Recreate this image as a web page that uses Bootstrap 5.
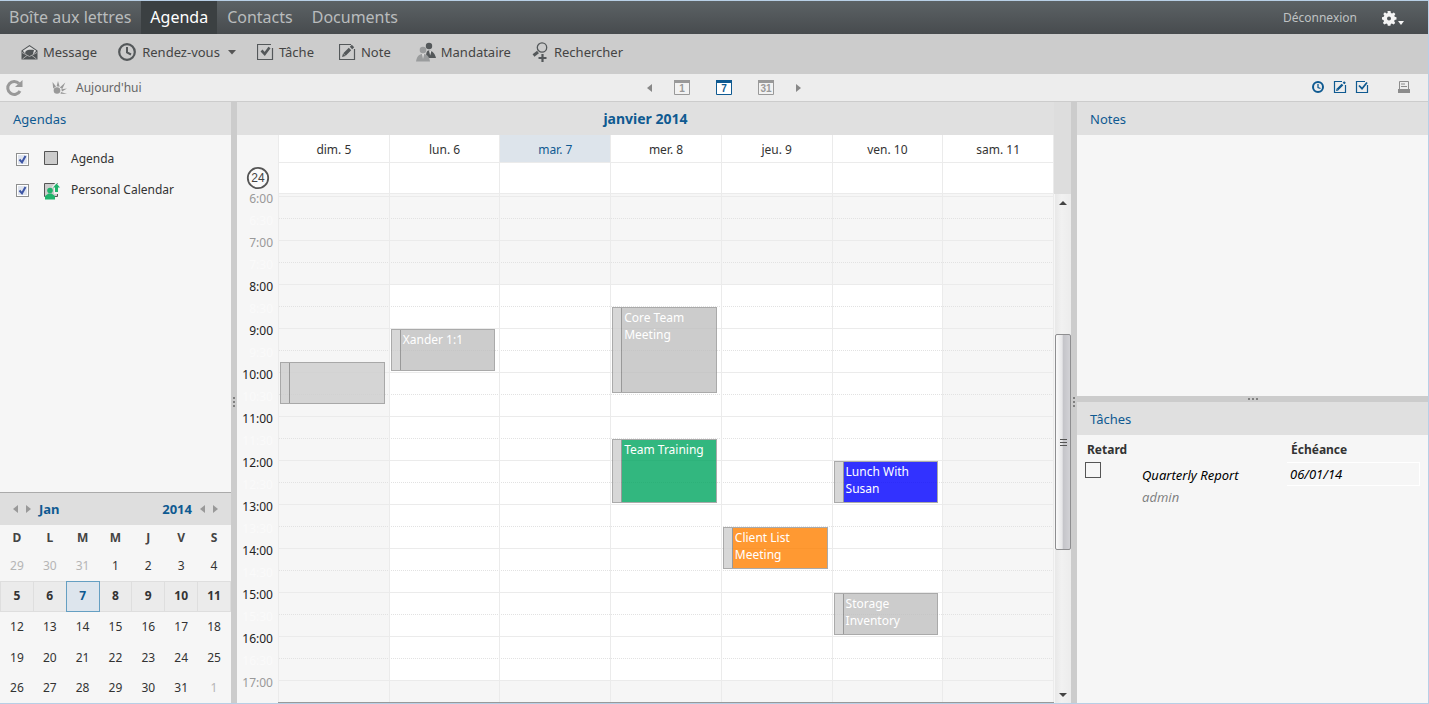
<!DOCTYPE html>
<html lang="fr">
<head>
<meta charset="utf-8">
<meta name="viewport" content="width=device-width, initial-scale=1">
<title>Agenda</title>
<link href="https://cdn.jsdelivr.net/npm/bootstrap@5.3.0/dist/css/bootstrap.min.css" rel="stylesheet">
<style>
  :root { --hour: 44px; --blue: #0f5a91; --line: #ebebeb; --pane: #f6f6f6; --head: #e0e0e0; --split: #ccc; }
  body { font: 12px/18px "Noto Sans", "Open Sans", sans-serif; color: #333; background: var(--pane); }
  .app-shell { border: 1px solid #b8cfe6; border-left: 0; }
  a { color: inherit; text-decoration: none; }
  button { border: 0; background: none; padding: 0; color: inherit; font: inherit; }
  svg { display: block; flex: none; }

  .top-bar { height: 33px; background: linear-gradient(#5c6265, #474b4e); color: #bfc2c3; }
  .top-nav { gap: 1px; }
  .top-bar .nav-link { font-size: 16px; line-height: 33px; padding: 0 9px; color: #b9bcbd; }
  .top-bar .nav-link.active { background: #3b4042; color: #fff; }
  .tool-bar { height: 40px; background: #ccc; font-size: 13px; color: #444; padding: 0 21px 4px; gap: 21px; }
  .sub-bar { height: 28px; background: #ededed; border-bottom: 1px solid #ccc; color: #666; }
  .view-switch { gap: 22px; }
  .date-tools { padding-right: 32px; }
  .pane-toggles { padding-right: 13px; }

  .side-left { width: 231px; }
  .side-right { width: 351px; }
  .pane-head { height: 33px; line-height: 34px; padding: 0 13px; background: var(--head); color: var(--blue); font-size: 13px; margin: 0; font-weight: 400; }
  .month-title { font-size: 14px; font-weight: 700; text-align: center; }
  .split-v { width: 6px; background: var(--split); }
  .split-h { height: 6px; background: var(--split); }
  .agenda-list { padding: 14px 16px; gap: 11px; }
  .agenda-list label { height: 20px; gap: 13px; color: #333; }
  .agenda-check { appearance: none; width: 13px; height: 13px; margin: 0; border: 1px solid #8e8f8f; background: #e4e8ee; box-shadow: inset 0 0 0 1px #fff; }
  .agenda-check:checked { background: #dfe4ee url("data:image/svg+xml,%3Csvg xmlns='http://www.w3.org/2000/svg' viewBox='0 0 11 11'%3E%3Cpath d='M2.5 5.5 5 8.300 8.500 2' fill='none' stroke='%233d55a5' stroke-width='2'/%3E%3C/svg%3E"); }

  .mini-cal { border-top: 1px solid #aaa; }
  .mini-head { height: 32px; background: #dedede; color: var(--blue); padding: 0 13px; font-weight: 700; font-size: 13px; }
  .mini-table { width: 100%; table-layout: fixed; text-align: center; border-collapse: collapse; margin-bottom: 0; }
  .mini-table th { height: 26px; font-weight: 700; color: #444; }
  .mini-table td { height: 31px; padding: 0; }
  .mini-table .short-week td { height: 30px; }
  .mini-table .out { color: #b5b5b5; }
  .mini-table .this-week td { font-weight: 700; background: #ebebeb; border: 1px solid #dedede; height: 30px; }
  .mini-table .this-week .today { background: #dde5ed; border: 1px double #659fc2; color: var(--blue); }

  .gutter { width: 41px; }
  .week-cols { display: grid; grid-template-columns: repeat(7, minmax(0, 1fr)); border-right: 1px solid var(--line); }
  .week-cols > * { border-left: 1px solid var(--line); }
  .day-name { height: 28px; line-height: 29px; text-align: center; background: #fff; border-bottom: 1px solid var(--line); }
  .day-name.today { background: #dde4eb; color: var(--blue); }
  .all-day { height: 31px; background: #fff; border-bottom: 1px solid var(--line); }
  .bar-filler { width: 17px; background: #ddd; }
  .week-body { min-height: 0; }
  .hour-gutter { margin-top: -6px; text-align: right; padding-right: 5px; }
  .hour-label { height: 22px; line-height: 22px; color: #222; }
  .hour-label.off { color: #999; }
  .hour-label.half { color: #fafafa; }
  .grid-zone { border-bottom: 1px solid #999; }
  .hour-rows { padding-top: 2px; }
  .hour-row { height: var(--hour); border-top: 1px solid var(--line); }
  .hour-row::before { content: ""; display: block; height: 21px; }
  .hour-row::after { content: ""; display: block; border-top: 1px dotted #e2e2e2; }
  .col-layer { inset: 0; }
  .work-time { top: calc(2px + 2 * var(--hour)); height: calc(9 * var(--hour)); left: 0; right: 0; background: #fff; z-index: -1; }
  .event-box { top: calc(3px + (var(--start) - 6) * var(--hour)); height: calc(var(--hours) * var(--hour) - 2px); left: 1px; right: 4px; border: 1px solid #959595; opacity: .8; background: #c0c0c0; color: #fff; line-height: 17px; display: flex; overflow: hidden; }
  .event-box::before { content: ""; flex: none; width: 9px; background: #cecece; border-right: 1px solid #808080; }
  .event-box span { padding: 1px 2px; }
  .event-green { background: #00a660; } .event-blue { background: #00f; } .event-orange { background: #ff8000; } .event-pale { background: #cecece; }

  .scroll-bar { width: 16px; margin-left: 1px; background: linear-gradient(90deg, #e8e8e8, #f1f1f1 40%, #ececec); }
  .scroll-btn { height: 17px; display: grid; place-items: center; }
  .scroll-thumb { border: 1px solid #8e8e90; border-radius: 2px; background: linear-gradient(90deg, #fafafa, #e6e6e8 45%, #c4c4c9 50%, #d2d2d6); }

  .task-table { width: 100%; table-layout: fixed; }
  .task-table th { padding: 6px 0 3px 10px; font-weight: 700; }
  .task-table td { padding: 0; vertical-align: top; font-size: 13px; }
  .task-check { appearance: none; width: 16px; height: 16px; border: 1px solid #555; margin: 0 0 0 8px; display: block; }
  .task-date { width: 133px; height: 24px; border: 1px solid #fff; border-left: 0; background: none; font-style: italic; color: #000; padding: 1px 3px; }
</style>
</head>
<body>
<div class="app-shell vh-100 d-flex flex-column overflow-hidden">

  <header class="top-bar d-flex flex-shrink-0 justify-content-between">
    <nav class="nav top-nav">
      <a class="nav-link" href="#">Boîte aux lettres</a>
      <a class="nav-link active" href="#">Agenda</a>
      <a class="nav-link" href="#">Contacts</a>
      <a class="nav-link" href="#">Documents</a>
    </nav>
    <div class="d-flex align-items-center gap-4 pe-4">
      <a href="#">Déconnexion</a>
      <button type="button" aria-label="Paramètres">
        <svg width="23" height="16" viewBox="0 0 23 16"><g fill="#f4f4f4"><path fill-rule="evenodd" d="M6.500 1h3l.4 2 1.200.5 1.700-1.100 1.600 1.600-1.100 1.700.4 1.100 1.800.4v2.400l-1.900.4-.4 1.200 1 1.700-1.600 1.600-1.700-1.100-1.100.5-.4 1.800h-2.600l-.4-1.800-1.200-.5-1.700 1.100-1.600-1.600 1.100-1.700-.5-1.200L1 9.500V7.200l1.800-.4.5-1.200-1-1.700 1.600-1.600 1.600 1.100 1.200-.5zM8 6.400a2 2 0 1 0 0 4 2 2 0 0 0 0-4z"/><path d="M17 11h6l-3 4z"/></g></svg>
      </button>
    </div>
  </header>

  <div class="tool-bar d-flex flex-shrink-0 align-items-center">
    <button type="button" class="d-flex align-items-center gap-1">
      <svg width="18" height="18" viewBox="0 0 18 18"><path d="M.5 7.500 8.500 2l8 5.500v9H.5z" fill="#505456"/><path d="M1.800 7.800 8.500 3.200l6.700 4.600L12.500 11h-8z" fill="#dcdcdc"/><path d="M4.500 8.500c3-2.500 6-1.500 8.500-1.500l-1.200 4.500-3.300 1.500L4 10.500z" fill="#505456"/><path d="m1 9.500 7.500 4L16 9.500M1.500 16l4.500-3.500M15.500 16 11 12.500" stroke="#aaa" fill="none"/></svg>Message</button>
    <button type="button" class="d-flex align-items-center gap-1">
      <svg width="20" height="20" viewBox="0 0 20 20" fill="none" stroke="#54585a"><circle cx="9" cy="10" r="7.800" stroke-width="2.200"/><path d="M9 5v5.500l4 2" stroke-width="2"/></svg>Rendez-vous
      <svg class="ms-1" width="8" height="5"><path d="M0 0h8L4 4.500z" fill="#555"/></svg></button>
    <button type="button" class="d-flex align-items-center gap-1">
      <svg width="18" height="18" viewBox="0 0 18 18" fill="none" stroke="#54585a"><path d="M15.500 5v11.500H.500V1.500H14" stroke-width="1.200"/><path d="m4.500 7.500 3.200 3.500L12.500 4.500" stroke-width="2.600"/></svg>Tâche</button>
    <button type="button" class="d-flex align-items-center gap-1 ms-1">
      <svg width="18" height="18" viewBox="0 0 18 18" fill="none" stroke="#54585a"><path d="M15.500 6v10.500H.500V1.500H12" stroke-width="1.200"/><path d="m5.500 11.500 5.500-5.500M12 5l2-2" stroke-width="3.400"/><path d="m3 14 1-3.500 2.500 2.500z" fill="#54585a" stroke="none"/></svg>Note</button>
    <button type="button" class="d-flex align-items-center gap-1 ms-1">
      <svg width="21" height="20" viewBox="0 0 21 20"><g fill="#54585a"><circle cx="13" cy="4" r="3.200"/><path d="M10 15c0-5 1-6.500 3-6.500s5.500 1.500 7 7.500h-9z"/><path d="m13 8.500 1.200 5 1.300-5z" fill="#ddd"/></g><g fill="#9a9c9d"><circle cx="7" cy="8" r="3.300"/><path d="M0 19.500C1 14 3 12 7 12s6 2 7 7.500z"/><path d="m6 12 1 5 1.200-5z" fill="#ddd"/></g></svg>Mandataire</button>
    <button type="button" class="d-flex align-items-center gap-1">
      <svg width="18" height="20" viewBox="0 0 18 20" fill="none" stroke="#54585a"><circle cx="10" cy="5.500" r="4.700" stroke-width="1.300"/><path d="M6 10 1.500 13.500" stroke-width="3"/><path d="M10.500 12v8M6.500 16h8" stroke-width="2.200"/></svg>Rechercher</button>
  </div>

  <div class="sub-bar row g-0 flex-shrink-0 align-items-center">
    <div class="col d-flex align-items-center date-tools">
      <button type="button" class="ms-1" aria-label="Actualiser"><svg width="20" height="18" viewBox="0 0 20 18"><path d="M16 12a6.500 6.500 0 1 1-1-7.500" fill="none" stroke="#999" stroke-width="3"/><path d="M18.500 1v7H11z" fill="#999"/></svg></button>
      <button type="button" class="d-flex align-items-center gap-2 ms-4 ps-1"><svg width="16" height="16" viewBox="0 0 16 16"><g fill="#999"><circle cx="5" cy="10.500" r="3.300"/><path d="m1.200 8.500-.7-6.500L4 6.500zM4.600 6.300 6 1l1.700 5.700zM7.800 7.500l5.500-5-3 6.500zM9.300 9.200l5.700-.7-5 3zM9 12l6 2-6.500-.2z"/></g></svg>Aujourd'hui</button>
    </div>
    <div class="col-auto d-flex align-items-center view-switch">
      <button type="button" aria-label="Précédent"><svg width="5" height="8"><path d="M5 0v8L0 4z" fill="#888"/></svg></button>
      <button type="button" aria-label="Jour"><svg width="16" height="17" viewBox="0 0 16 17"><path d="M.5 1.500h15v14H.5z" fill="#f2f2f2" stroke="#999"/><path d="M0 1h16v3H0z" fill="#999"/><text x="8" y="13" text-anchor="middle" font-family="Liberation Sans" font-size="10" font-weight="700" fill="#999">1</text></svg></button>
      <button type="button" class="mx-1" aria-label="Semaine"><svg width="16" height="17" viewBox="0 0 16 17"><path d="M.5 1.500h15v14H.5z" fill="#fff" stroke="#0f5a91"/><path d="M0 1h16v3H0z" fill="#0f5a91"/><text x="8" y="13" text-anchor="middle" font-family="Liberation Sans" font-size="10" font-weight="700" fill="#0f5a91">7</text></svg></button>
      <button type="button" aria-label="Mois"><svg width="16" height="17" viewBox="0 0 16 17"><path d="M.5 1.500h15v14H.5z" fill="#f2f2f2" stroke="#999"/><path d="M0 1h16v3H0z" fill="#999"/><text x="8" y="13" text-anchor="middle" font-family="Liberation Sans" font-size="10" font-weight="700" fill="#999">31</text></svg></button>
      <button type="button" aria-label="Suivant"><svg width="5" height="8"><path d="M0 0v8l5-4z" fill="#888"/></svg></button>
    </div>
    <div class="col d-flex align-items-center justify-content-end pane-toggles">
      <button type="button" class="me-2" aria-label="Rendez-vous"><svg width="14" height="16" viewBox="0 0 14 16" fill="none" stroke="#0f5a91"><circle cx="7" cy="7" r="5" stroke-width="2"/><path d="M7 4v3.500l2.500 1" stroke-width="1.300"/></svg></button>
      <button type="button" class="me-2" aria-label="Notes"><svg width="14" height="16" viewBox="0 0 14 16" fill="none" stroke="#0f5a91"><path d="M12.500 5v7.500h-11v-11H9" stroke-width="1.200"/><path d="m4.500 9.500 5-5M10.500 3.500l1.500-1.500" stroke-width="2.400"/><path d="m3 11 .6-2.500L5.500 10.400z" fill="#0f5a91" stroke="none"/></svg></button>
      <button type="button" class="me-4" aria-label="Tâches"><svg width="14" height="16" viewBox="0 0 14 16" fill="none" stroke="#0f5a91"><path d="M12.500 5v7.500h-11v-11H10" stroke-width="1.200"/><path d="m4 5.500 3 3.200L12 2.500" stroke-width="1.800"/></svg></button>
      <button type="button" class="mx-1" aria-label="Imprimer"><svg width="14" height="16" viewBox="0 0 14 16"><path d="M2.500 9V1.500h9V9M4 4h4M4 6.500h6" fill="none" stroke="#8c8c8c"/><path d="M1 9h12v4H1z" fill="#8c8c8c"/></svg></button>
    </div>
  </div>

  <main class="d-flex flex-fill overflow-hidden">
    <aside class="side-left flex-shrink-0 d-flex flex-column justify-content-between">
      <section>
        <h2 class="pane-head">Agendas</h2>
        <div class="agenda-list d-flex flex-column">
          <label class="d-flex align-items-center"><input type="checkbox" class="agenda-check" checked>
            <svg width="16" height="18" viewBox="0 0 16 18"><path d="M2.500 1.500h13v13h-13z" fill="#ccc" stroke="#555"/></svg>Agenda</label>
          <label class="d-flex align-items-center"><input type="checkbox" class="agenda-check" checked>
            <svg width="16" height="20" viewBox="0 0 16 20" overflow="visible"><path d="M2.500 3.500h13v13h-13z" fill="#ccc" stroke="#555"/><path d="m14 2 4.500 5.500H17V14h-5V7.500H9.500z" fill="#f2f2f2"/><g fill="#1fb36b"><circle cx="8" cy="10.500" r="2.800"/><path d="M3 19.500V16l3.500-2.500h3L13 16v3.500z"/><path d="m14.500 3.500 3.500 4h-2v4.500h-3V7.500h-2z"/></g></svg>Personal Calendar</label>
        </div>
      </section>
      <section class="mini-cal">
        <div class="mini-head d-flex align-items-center justify-content-between">
          <div class="d-flex align-items-center gap-2">
            <button type="button" aria-label="Mois précédent"><svg width="5" height="8"><path d="M5 0v8L0 4z" fill="#999"/></svg></button>
            <button type="button" aria-label="Mois suivant"><svg width="5" height="8"><path d="M0 0v8l5-4z" fill="#999"/></svg></button>
            <span>Jan</span></div>
          <div class="d-flex align-items-center gap-2"><span>2014</span>
            <button type="button" aria-label="Année précédente"><svg width="5" height="8"><path d="M5 0v8L0 4z" fill="#999"/></svg></button>
            <button type="button" aria-label="Année suivante"><svg width="5" height="8"><path d="M0 0v8l5-4z" fill="#999"/></svg></button></div>
        </div>
        <table class="mini-table">
          <thead><tr><th>D</th><th>L</th><th>M</th><th>M</th><th>J</th><th>V</th><th>S</th></tr></thead>
          <tbody>
            <tr class="short-week"><td class="out">29</td><td class="out">30</td><td class="out">31</td><td>1</td><td>2</td><td>3</td><td>4</td></tr>
            <tr class="this-week"><td>5</td><td>6</td><td class="today">7</td><td>8</td><td>9</td><td>10</td><td>11</td></tr>
            <tr><td>12</td><td>13</td><td>14</td><td>15</td><td>16</td><td>17</td><td>18</td></tr>
            <tr><td>19</td><td>20</td><td>21</td><td>22</td><td>23</td><td>24</td><td>25</td></tr>
            <tr class="short-week"><td>26</td><td>27</td><td>28</td><td>29</td><td>30</td><td>31</td><td class="out">1</td></tr>
          </tbody>
        </table>
      </section>
    </aside>

    <div class="split-v flex-shrink-0 d-flex align-items-center justify-content-center"><svg width="3" height="11"><path d="M0 0h2v2H0zM0 4h2v2H0zM0 8h2v2H0z" fill="#808080"/></svg></div>

    <section class="flex-fill d-flex flex-column overflow-hidden">
      <div class="d-flex flex-shrink-0">
        <div class="flex-fill">
          <h1 class="pane-head month-title">janvier 2014</h1>
          <div class="d-flex">
            <div class="gutter flex-shrink-0 d-flex align-items-end justify-content-center pb-1">
              <svg width="24" height="24" viewBox="0 0 24 24"><circle cx="12" cy="12" r="10.200" fill="#fafafa" stroke="#555" stroke-width="1.800"/><text x="12" y="16" text-anchor="middle" font-family="Liberation Sans" font-size="12" fill="#444">24</text></svg>
            </div>
            <div class="flex-fill">
              <div class="week-cols">
                <div class="day-name">dim. 5</div><div class="day-name">lun. 6</div><div class="day-name today">mar. 7</div><div class="day-name">mer. 8</div><div class="day-name">jeu. 9</div><div class="day-name">ven. 10</div><div class="day-name">sam. 11</div>
              </div>
              <div class="week-cols">
                <div class="all-day"></div><div class="all-day"></div><div class="all-day"></div><div class="all-day"></div><div class="all-day"></div><div class="all-day"></div><div class="all-day"></div>
              </div>
            </div>
          </div>
        </div>
        <div class="bar-filler flex-shrink-0"></div>
      </div>

      <div class="week-body d-flex flex-fill">
        <div class="gutter flex-shrink-0">
          <div class="hour-gutter">
            <div class="hour-label off">6:00</div><div class="hour-label half">6:30</div>
            <div class="hour-label off">7:00</div><div class="hour-label half">7:30</div>
            <div class="hour-label">8:00</div><div class="hour-label half">8:30</div>
            <div class="hour-label">9:00</div><div class="hour-label half">9:30</div>
            <div class="hour-label">10:00</div><div class="hour-label half">10:30</div>
            <div class="hour-label">11:00</div><div class="hour-label half">11:30</div>
            <div class="hour-label">12:00</div><div class="hour-label half">12:30</div>
            <div class="hour-label">13:00</div><div class="hour-label half">13:30</div>
            <div class="hour-label">14:00</div><div class="hour-label half">14:30</div>
            <div class="hour-label">15:00</div><div class="hour-label half">15:30</div>
            <div class="hour-label">16:00</div><div class="hour-label half">16:30</div>
            <div class="hour-label off">17:00</div>
          </div>
        </div>
        <div class="grid-zone flex-fill position-relative overflow-hidden z-0">
          <div class="hour-rows">
            <div class="hour-row"></div><div class="hour-row"></div><div class="hour-row"></div><div class="hour-row"></div><div class="hour-row"></div><div class="hour-row"></div><div class="hour-row"></div><div class="hour-row"></div><div class="hour-row"></div><div class="hour-row"></div><div class="hour-row"></div><div class="hour-row"></div>
          </div>
          <div class="col-layer week-cols position-absolute">
            <div class="position-relative">
              <div class="event-box event-pale position-absolute" style="--start:9.75;--hours:1"></div>
            </div>
            <div class="position-relative"><div class="work-time position-absolute"></div>
              <div class="event-box position-absolute" style="--start:9;--hours:1"><span>Xander 1:1</span></div>
            </div>
            <div class="position-relative"><div class="work-time position-absolute"></div></div>
            <div class="position-relative"><div class="work-time position-absolute"></div>
              <div class="event-box position-absolute" style="--start:8.5;--hours:2"><span>Core Team Meeting</span></div>
              <div class="event-box event-green position-absolute" style="--start:11.5;--hours:1.5"><span>Team Training</span></div>
            </div>
            <div class="position-relative"><div class="work-time position-absolute"></div>
              <div class="event-box event-orange position-absolute" style="--start:13.5;--hours:1"><span>Client List Meeting</span></div>
            </div>
            <div class="position-relative"><div class="work-time position-absolute"></div>
              <div class="event-box event-blue position-absolute" style="--start:12;--hours:1"><span>Lunch With Susan</span></div>
              <div class="event-box position-absolute" style="--start:15;--hours:1"><span>Storage Inventory</span></div>
            </div>
            <div class="position-relative"></div>
          </div>
        </div>
        <div class="scroll-bar flex-shrink-0 d-flex flex-column">
          <div class="scroll-btn"><svg width="8" height="4"><path d="M0 4h8L4 0z" fill="#444"/></svg></div>
          <div style="flex:124 0 0"></div>
          <div class="scroll-thumb d-flex align-items-center justify-content-center" style="flex:215 0 0"><svg width="7" height="9"><path d="M0 1.500h7M0 4.500h7M0 7.500h7" stroke="#555"/></svg></div>
          <div style="flex:137 0 0"></div>
          <div class="scroll-btn"><svg width="8" height="4"><path d="M0 0h8L4 4z" fill="#444"/></svg></div>
        </div>
      </div>
    </section>

    <div class="split-v flex-shrink-0 d-flex align-items-center justify-content-center"><svg width="3" height="11"><path d="M0 0h2v2H0zM0 4h2v2H0zM0 8h2v2H0z" fill="#808080"/></svg></div>

    <aside class="side-right flex-shrink-0 d-flex flex-column">
      <section style="flex:294 0 0"><h2 class="pane-head">Notes</h2></section>
      <div class="split-h d-flex align-items-center justify-content-center"><svg width="10" height="2"><path d="M0 0h2v2H0zM4 0h2v2H4zM8 0h2v2H8z" fill="#808080"/></svg></div>
      <section style="flex:301 0 0">
        <h2 class="pane-head">Tâches</h2>
        <table class="task-table">
          <colgroup><col style="width:65px"><col><col style="width:141px"></colgroup>
          <thead><tr><th colspan="2">Retard</th><th class="ps-1">Échéance</th></tr></thead>
          <tbody><tr>
            <td><input type="checkbox" class="task-check" aria-label="Quarterly Report terminée"></td>
            <td class="fst-italic"><div class="text-black pt-1">Quarterly Report</div><div class="text-black-50 pt-1">admin</div></td>
            <td><input type="text" class="task-date" value="06/01/14" aria-label="Échéance"></td>
          </tr></tbody>
        </table>
      </section>
    </aside>
  </main>
</div>
<script src="https://cdn.jsdelivr.net/npm/bootstrap@5.3.0/dist/js/bootstrap.bundle.min.js"></script>
</body>
</html>
